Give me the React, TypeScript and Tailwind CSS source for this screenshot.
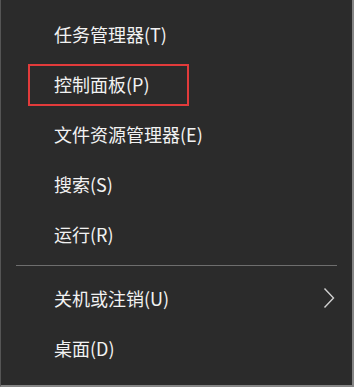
const items = [
    { label: "任务管理器(T)" },
    { label: "控制面板(P)", highlight: true },
    { label: "文件资源管理器(E)" },
    { label: "搜索(S)" },
    { label: "运行(R)" },
];

const bottomItems = [
    { label: "关机或注销(U)", submenu: true },
    { label: "桌面(D)" },
];

function MenuRow({ label, highlight, submenu }: { label: string; highlight?: boolean; submenu?: boolean }) {
    return (
        <div className="relative flex h-[50px] items-center pl-[53px] pr-[18px]">
            {highlight && (
                <span className="absolute left-[27px] top-[5px] h-[42px] w-[161px] border-2 border-[#e23b3b]" />
            )}
            <span className="flex-1 text-[18px] leading-none text-[#f2f2f2]">{label}</span>
            {submenu && (
                <svg width="12" height="22" viewBox="0 0 12 22" className="mr-[-1px] text-[#d0d0d0]">
                    <path d="M1.5 1.5 L10.5 11 L1.5 20.5" fill="none" stroke="currentColor" strokeWidth="1.4" />
                </svg>
            )}
        </div>
    );
}

export default function App() {
    return (
        <div
            className="h-[387px] w-[354px] overflow-hidden border-l border-r-2 border-b-2 border-l-[#555555] border-r-[#858585] border-b-[#858585] bg-[#2b2b2b] pt-[9px]"
            style={{ fontFamily: '"Noto Sans CJK SC", "Noto Sans", sans-serif' }}
        >
            {items.map((item) => (
                <MenuRow key={item.label} label={item.label} highlight={item.highlight} />
            ))}
            <div className="mx-[15px] mt-[6px] mb-[7px] h-px bg-[#6e6e6e]" />
            {bottomItems.map((item) => (
                <MenuRow key={item.label} label={item.label} submenu={item.submenu} />
            ))}
        </div>
    );
}
